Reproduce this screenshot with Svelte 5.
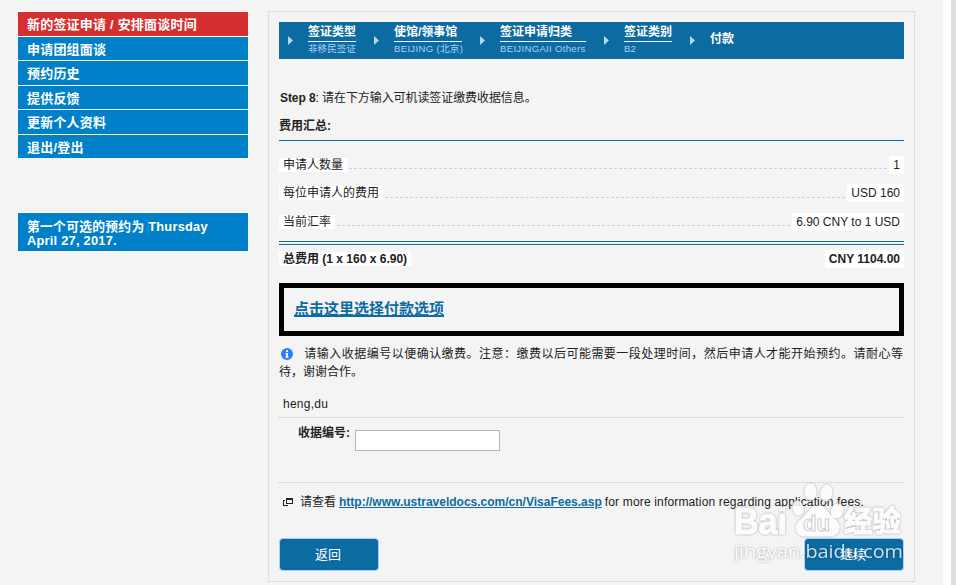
<script>
	let menu = [
		'新的签证申请 / 安排面谈时间',
		'申请团组面谈',
		'预约历史',
		'提供反馈',
		'更新个人资料',
		'退出/登出'
	];
	let current = 0;

	let steps = [
		{ title: '签证类型', value: '非移民签证', width: 48 },
		{ title: '使馆/领事馆', value: 'BEIJING (北京)', width: 68 },
		{ title: '签证申请归类', value: 'BEIJINGAII Others', width: 86 },
		{ title: '签证类别', value: 'B2', width: 48 },
		{ title: '付款', value: null, width: 48 }
	];

	let fees = [
		{ label: '申请人数量', value: '1' },
		{ label: '每位申请人的费用', value: 'USD 160' },
		{ label: '当前汇率', value: '6.90 CNY to 1 USD' }
	];

	let receipt = '';
</script>

<div class="page">
	<aside>
		<nav>
			{#each menu as item, i}
				<a href="#top" class:active={i === current}>{item}</a>
			{/each}
		</nav>
		<div class="next-date">第一个可选的预约为 Thursday<br />April 27, 2017.</div>
	</aside>

	<main>
		<div class="steps">
			{#each steps as step}
				<svg class="arrow" width="5" height="9" viewBox="0 0 5 9"><path d="M0 0L5 4.5L0 9Z" /></svg>
				<div class="step" class:last={!step.value} style="width: {step.width}px">
					<b>{step.title}</b>
					{#if step.value}
						<span class:wide={step.width > 48}>{step.value}</span>
					{/if}
				</div>
			{/each}
		</div>

		<p class="intro"><b>Step 8</b>: 请在下方输入可机读签证缴费收据信息。</p>
		<h2>费用汇总:</h2>

		<div class="fees">
			{#each fees as fee}
				<div class="fee">
					<span class="label">{fee.label}</span>
					<i></i>
					<span class="value">{fee.value}</span>
				</div>
			{/each}
		</div>
		<div class="fee total">
			<span class="label">总费用 (1 x 160 x 6.90)</span>
			<span class="value">CNY 1104.00</span>
		</div>

		<div class="pay"><a href="#pay">点击这里选择付款选项</a></div>

		<p class="note">
			<svg width="12" height="12" viewBox="0 0 12 12">
				<circle cx="6" cy="6" r="6" fill="#2a7fff" />
				<path d="M5 2.2h2v1.8H5zM4.500 5H7v3.800h.600v1H4.400v-1H5V6h-.500z" fill="#fff" />
			</svg>
			<span class="first">请输入收据编号以便确认缴费。注意：缴费以后可能需要一段处理时间，然后申请人才能开始预约。请耐心等</span><br />待，谢谢合作。
		</p>

		<div class="applicant">heng,du</div>
		<div class="receipt">
			<label for="receipt">收据编号:</label>
			<input type="text" id="receipt" bind:value={receipt} />
		</div>

		<p class="more">
			<svg width="10" height="8" viewBox="0 0 10 8" shape-rendering="crispEdges">
				<path d="M3 0h7v6H3zM4 2v3h5V2zM0 2h2v1H1v4h4v1H0z" fill-rule="evenodd" fill="#222" />
			</svg>
			<span class="see">请查看</span>
			<a href="#fees">http://www.ustraveldocs.com/cn/VisaFees.asp</a>
			<span class="tail">for more information regarding application fees.</span>
		</p>

		<div class="buttons">
			<button>返回</button>
			<button>继续</button>
		</div>
	</main>

	<svg class="watermark" width="180" height="92" viewBox="0 0 180 92">
		<g class="mark">
			<text x="6" y="56" font-size="36" textLength="53" lengthAdjust="spacingAndGlyphs">Bai</text>
			<ellipse cx="82.500" cy="14" rx="5.500" ry="8" />
			<ellipse cx="98.500" cy="15" rx="5.500" ry="8" transform="rotate(12 98 15)" />
			<ellipse cx="70" cy="30" rx="5" ry="7" transform="rotate(-15 70 30)" />
			<ellipse cx="109" cy="33" rx="5.500" ry="7" transform="rotate(20 109 33)" />
			<path d="M90 28C82 28 80 36 74 41C65 47 67 58 78 58L100 58C113 58 114 47 106 41C100 36 98 28 90 28Z" />
			<text x="116" y="54" font-size="29" textLength="57" lengthAdjust="spacingAndGlyphs">经验</text>
		</g>
		<text class="du" x="75" y="53" font-size="22" textLength="27" lengthAdjust="spacingAndGlyphs">du</text>
		<text class="site" x="6" y="80" font-size="19" textLength="169" lengthAdjust="spacingAndGlyphs">jingyan.baidu.com</text>
	</svg>
</div>

<style>
	:global(body) {
		overflow: hidden;
		background: #ddd;
	}

	.page {
		position: relative;
		box-sizing: border-box;
		display: flex;
		align-items: flex-start;
		width: 951px;
		height: 585px;
		padding: 11px 0 0 18px;
		background: #f4f4f4;
		border-right: 8px solid #fff;
		font: 12px/18px 'Liberation Sans', 'Noto Sans CJK SC', sans-serif;
		color: #222;
	}

	p,
	h2 {
		margin: 0;
	}

	aside {
		width: 230px;
		margin-right: 20px;
		font-size: 13px;
		font-weight: bold;
		color: #fff;
	}

	nav a {
		display: block;
		box-sizing: border-box;
		height: 24.5px;
		padding-left: 9px;
		border-top: 1px solid #fff;
		background: #0080c9;
		line-height: 25px;
		letter-spacing: 0.2px;
		color: #fff;
		text-decoration: none;
	}

	nav a.active {
		background: #d52f2f;
	}

	.next-date {
		box-sizing: border-box;
		height: 39px;
		margin-top: 54px;
		padding: 7px 9px 0;
		border-top: 1px solid #fff;
		background: #0080c9;
		font-size: 12.8px;
		line-height: 14px;
		letter-spacing: 0.25px;
	}

	main {
		box-sizing: border-box;
		width: 647px;
		height: 571px;
		padding: 10px;
		border: 1px dotted #c8c8c8;
	}

	.steps {
		display: flex;
		height: 37px;
		padding-left: 9px;
		background: #0c6ba1;
		color: #fff;
		white-space: nowrap;
	}

	.arrow {
		margin: 14px 15px 0 0;
		fill: #b5d5f5;
	}

	.step {
		margin-right: 18px;
	}

	.step b {
		display: block;
		height: 19px;
		border-bottom: 1px solid #fff;
		line-height: 21px;
	}

	.step span {
		display: block;
		font-size: 9.6px;
		line-height: 14px;
		color: #a9d0f5;
	}

	.step .wide {
		letter-spacing: 0.3px;
	}

	.step.last b {
		border: 0;
		line-height: 35px;
	}

	.intro {
		margin: 30px 0 0 1px;
		letter-spacing: -0.08px;
	}

	h2 {
		height: 23px;
		margin-top: 10px;
		border-bottom: 1px solid #0c6ba1;
		font-size: 12px;
		line-height: 18px;
	}

	.fees {
		height: 100px;
		box-sizing: border-box;
		padding-top: 15px;
	}

	.fee {
		display: flex;
		height: 18px;
		margin-bottom: 10.4px;
	}

	.fee .label {
		height: 14px;
		margin-top: 2px;
		padding: 0 4px;
		background: #fff;
		line-height: 14px;
	}

	.fee i {
		flex: 1;
		height: 12.3px;
		margin: 0 2px;
		border-bottom: 1px dashed #b5d5f5;
	}

	.fee .value {
		padding: 0 4px;
		background: #fff;
	}

	.total {
		height: 18px;
		margin: 0;
		padding-top: 5px;
		border-top: 4px double #0c6ba1;
		justify-content: space-between;
		font-weight: bold;
	}

	.pay {
		box-sizing: border-box;
		height: 53px;
		margin-top: 15px;
		padding: 10px;
		border: 5px solid #000;
		font-size: 15px;
		font-weight: bold;
		line-height: 22px;
	}

	.pay a {
		text-decoration-thickness: 2px;
	}

	a {
		color: #0c6ba1;
	}

	.note {
		margin-top: 9px;
		white-space: nowrap;
	}

	.note svg {
		margin: 0 8px 0 2px;
		vertical-align: -2px;
	}

	.first {
		letter-spacing: 0.48px;
	}

	.applicant {
		height: 22px;
		margin-top: 14px;
		padding-left: 4px;
		border-bottom: 1px dotted #c8c8c8;
		letter-spacing: 0.25px;
	}

	.receipt {
		display: flex;
		box-sizing: border-box;
		height: 65px;
		padding: 6px 0 0 19px;
		border-bottom: 1px dotted #c8c8c8;
		font-weight: bold;
	}

	.receipt label {
		width: 57px;
	}

	.receipt input {
		box-sizing: border-box;
		width: 145px;
		height: 21px;
		margin-top: 6px;
		border: 1px solid #b5b5b5;
		background: #fff;
	}

	.more {
		display: flex;
		align-items: baseline;
		margin: 10px 0 0 4px;
		white-space: nowrap;
	}

	.more svg {
		margin-right: 7px;
	}

	.more a {
		margin: 0 3px;
		font-weight: bold;
	}

	.tail {
		letter-spacing: 0.16px;
	}

	.buttons {
		display: flex;
		justify-content: space-between;
		margin-top: 27px;
	}

	button {
		width: 100px;
		height: 33px;
		padding: 0 2px 2px 0;
		border: 1px solid #a9d0f5;
		border-radius: 4px;
		background: #0c6ba1;
		font: 13px 'Liberation Sans', 'Noto Sans CJK SC', sans-serif;
		color: #fff;
	}

	/* site stamp laid over the bottom right corner */
	.watermark {
		position: absolute;
		left: 728px;
		top: 478px;
		fill: #fff;
		pointer-events: none;
		opacity: 0.8;
		filter: drop-shadow(0 0 1px rgba(0, 0, 0, 0.4));
	}

	.mark {
		font-family: 'Liberation Sans', 'Noto Sans CJK SC', sans-serif;
		font-weight: bold;
		stroke: #fff;
		stroke-width: 1.2;
	}

	.du {
		font-family: 'Liberation Sans', sans-serif;
		font-weight: bold;
		stroke: #c4c4c4;
		stroke-width: 1;
	}

	.site {
		font-family: 'Open Sans', sans-serif;
	}
</style>
